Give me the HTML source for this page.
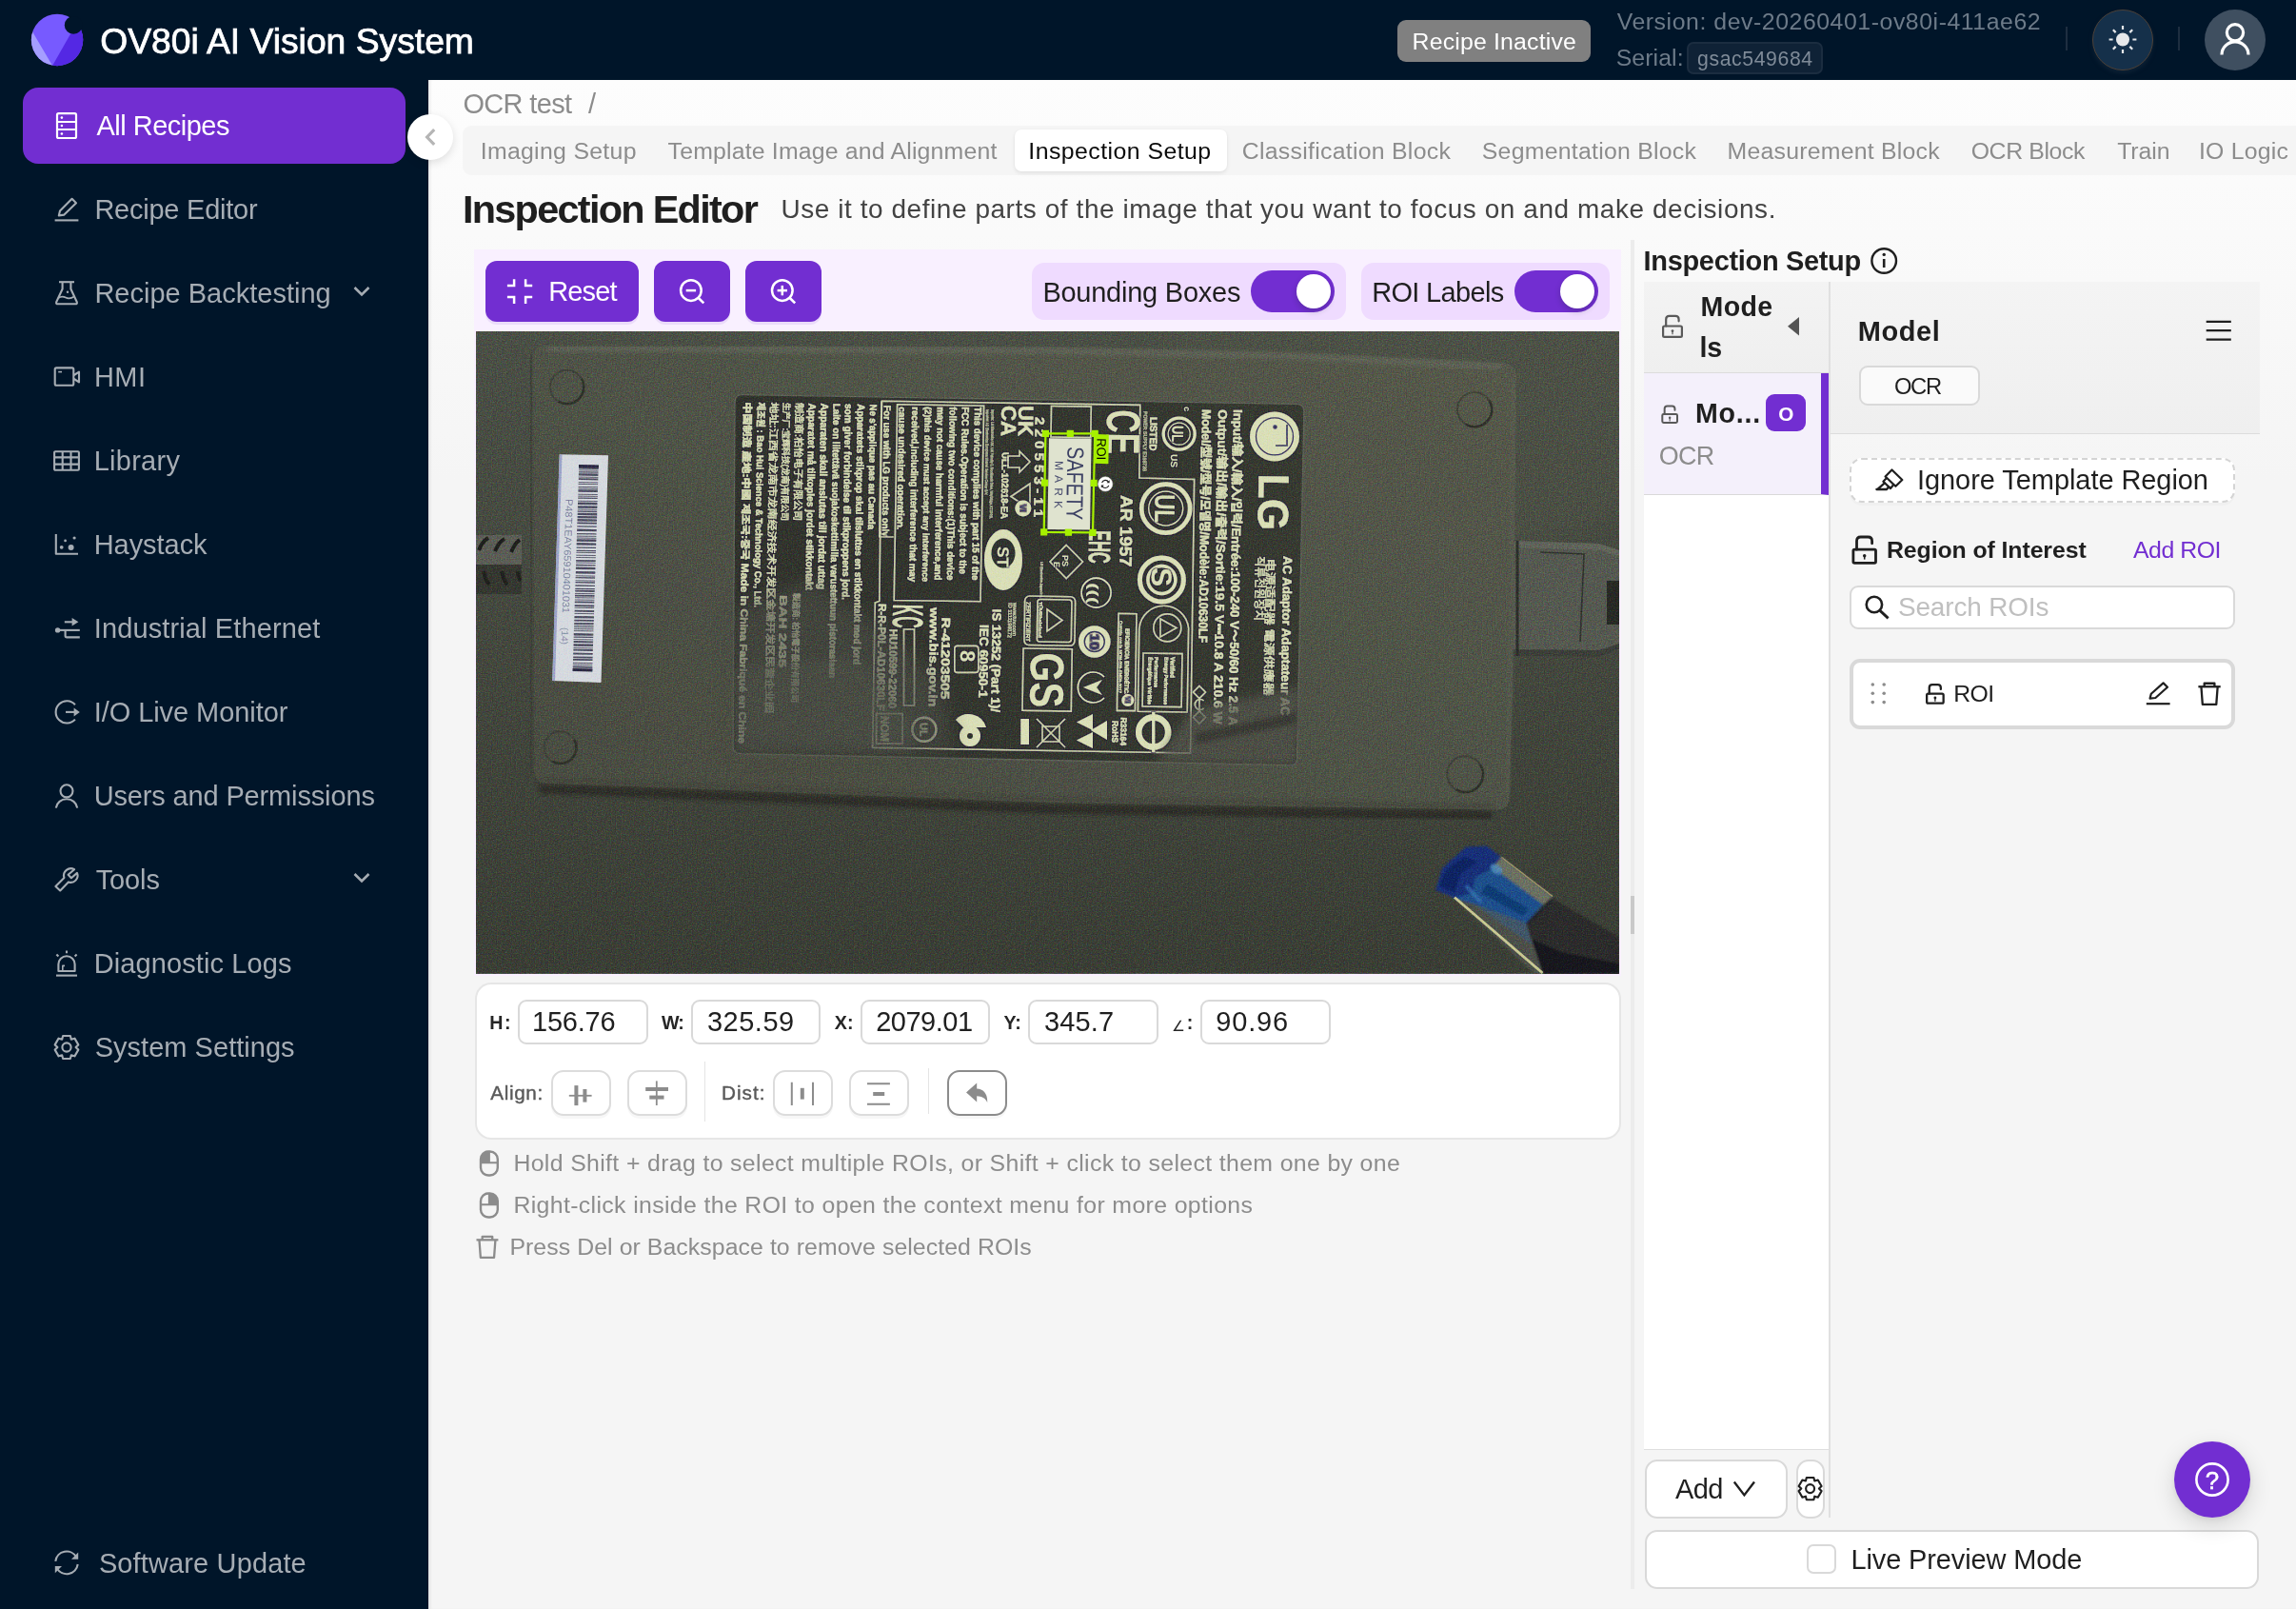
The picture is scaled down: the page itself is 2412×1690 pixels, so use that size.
<!DOCTYPE html>
<html lang="en"><head><meta charset="utf-8"><title>OV80i AI Vision System</title>
<style>
*{box-sizing:border-box}
html,body{margin:0;padding:0}
body{width:2412px;height:1690px;overflow:hidden;background:#001529;position:relative;font-family:"Liberation Sans",sans-serif;transform:translateZ(0);-webkit-font-smoothing:antialiased;}
.a{position:absolute}
.t{position:absolute;white-space:pre;line-height:1;margin:0;font-weight:400;display:block}
.main{left:450px;top:84px;width:1962px;height:1606px;background:linear-gradient(to bottom,#fdfdfd 0px,#fafafa 160px,#f5f5f5 420px,#f5f5f5 100%);box-shadow:inset 3px 0 3px -1px rgba(0,0,0,.08)}
.pbtn{background:#722ed1;border-radius:12px;box-shadow:0 3px 0 rgba(114,46,209,.10)}
.inp{top:1049.5px;height:47px;width:136.3px;border:2px solid #d9d9d9;border-radius:9px;background:#fff}
.abtn{top:1124px;height:48px;width:63px;border:2px solid #dcdcdc;border-radius:13px;background:#fff;box-shadow:0 3px 0 rgba(0,0,0,.03)}
.sw{width:88px;height:44px;border-radius:22px;background:#722ed1;top:284px}
.sw i{position:absolute;left:48px;top:4px;width:36px;height:36px;border-radius:18px;background:#fff;box-shadow:0 3px 6px rgba(0,35,11,.2)}
.pill{top:276px;height:60px;border-radius:13px;background:#efdbff}
</style></head>
<body>
<div class="a main"></div>
<header id="topbar">
<div class="a" style="left:1468px;top:21px;width:203px;height:44px;border-radius:9px;background:#808080"></div>
<div class="a" style="left:1772px;top:44px;width:143px;height:33.5px;border-radius:7px;background:#0f2236;border:2px solid #1b2d40"></div>
<div class="a" style="left:2170px;top:28px;width:2px;height:25px;background:#1e2e40"></div>
<div class="a" style="left:2288px;top:28px;width:2px;height:25px;background:#1e2e40"></div>
<div class="a" style="left:2198px;top:9.5px;width:64px;height:64px;border-radius:32px;background:#15304a;border:1.6px solid #4c4138;box-shadow:0 3px 4px rgba(20,40,60,.6)"></div>
<div class="a" style="left:2316px;top:9.5px;width:64px;height:64px;border-radius:32px;background:#3f4f60"></div>
<svg class="a" style="left:0;top:0;overflow:visible;pointer-events:none" width="2412" height="1690" viewBox="0 0 2412 1690" fill="none" stroke-linejoin="round">
<g><clipPath id="lgc"><circle cx="60.05" cy="41.95" r="27.2"/></clipPath><g clip-path="url(#lgc)"><rect x="30" y="10" width="60" height="64" fill="#775aff"/><path d="M55.1 68.9L28.4 23.7H0V90H55.1Z" fill="#a59eff"/><path d="M55.1 68.9L85 16.4H100V90H55.1Z" fill="#5428e4"/></g><circle cx="77.2" cy="26.4" r="9.4" fill="#001529"/></g>
<circle cx="2230" cy="41.5" r="7" fill="#e6e8ea"/><path d="M2240.40 41.50L2244.40 41.50M2237.35 48.85L2240.18 51.68M2230.00 51.90L2230.00 55.90M2222.65 48.85L2219.82 51.68M2219.60 41.50L2215.60 41.50M2222.65 34.15L2219.82 31.32M2230.00 31.10L2230.00 27.10M2237.35 34.15L2240.18 31.32" stroke="#e6e8ea" stroke-width="2.2"/>
<circle cx="2348" cy="34.2" r="8.6" stroke="#fff" stroke-width="3.2"/><path d="M2334 57.5A14 13.6 0 0 1 2362 57.5" stroke="#fff" stroke-width="3.2"/>
</svg>
<h1 class="t" style="left:105.17px;top:24.51px;font-size:37.26px;color:#ffffff;letter-spacing:0.002px;-webkit-text-stroke:0.75px #ffffff;">OV80i AI Vision System</h1>
<span class="t" style="left:1483.60px;top:32.31px;font-size:24.84px;color:#ffffff;letter-spacing:0.176px;">Recipe Inactive</span>
<span class="t" style="left:1698.70px;top:11.11px;font-size:24.84px;color:#6d7b89;letter-spacing:0.554px;">Version: dev-20260401-ov80i-411ae62</span>
<span class="t" style="left:1697.70px;top:48.81px;font-size:24.84px;color:#6d7b89;letter-spacing:0.087px;">Serial:</span>
<span class="t" style="left:1783.00px;top:51.01px;font-size:21.22px;color:#7f8b98;letter-spacing:0.608px;">gsac549684</span>
</header>
<main id="content">
<nav id="breadcrumb" aria-label="Breadcrumb">
<span class="t" style="left:486.40px;top:95.30px;font-size:28.98px;color:#8c8c8c;letter-spacing:-0.638px;">OCR test</span>
<span class="t" style="left:618.00px;top:95.30px;font-size:28.98px;color:#8c8c8c;letter-spacing:0.000px;">/</span>
</nav>
<nav id="recipe-tabs" aria-label="Recipe steps">
<div class="a" style="left:486px;top:132px;width:1926px;height:52px;border-radius:9px 0 0 9px;background:#f5f5f5"></div>
<div class="a" style="left:1066px;top:136px;width:223px;height:43.5px;border-radius:7px;background:#fff;box-shadow:0 2px 4px rgba(0,0,0,.08),0 0 2px rgba(0,0,0,.04)"></div>
<span class="t" style="left:504.70px;top:147.00px;font-size:24.84px;color:#8c8c8c;letter-spacing:0.308px;">Imaging Setup</span>
<span class="t" style="left:701.60px;top:147.00px;font-size:24.84px;color:#8c8c8c;letter-spacing:0.179px;">Template Image and Alignment</span>
<span class="t" style="left:1080.30px;top:147.00px;font-size:24.84px;color:#0a0a0a;letter-spacing:0.456px;">Inspection Setup</span>
<span class="t" style="left:1304.80px;top:147.00px;font-size:24.84px;color:#8c8c8c;letter-spacing:0.270px;">Classification Block</span>
<span class="t" style="left:1556.80px;top:147.00px;font-size:24.84px;color:#8c8c8c;letter-spacing:0.252px;">Segmentation Block</span>
<span class="t" style="left:1814.50px;top:147.00px;font-size:24.84px;color:#8c8c8c;letter-spacing:0.232px;">Measurement Block</span>
<span class="t" style="left:2070.70px;top:147.00px;font-size:24.84px;color:#8c8c8c;letter-spacing:-0.384px;">OCR Block</span>
<span class="t" style="left:2224.20px;top:147.00px;font-size:24.84px;color:#8c8c8c;letter-spacing:-0.059px;">Train</span>
<span class="t" style="left:2309.90px;top:147.00px;font-size:24.84px;color:#8c8c8c;letter-spacing:0.222px;">IO Logic</span>
</nav>
<section id="inspection-editor">
<h2 class="t" style="left:485.90px;top:199.52px;font-size:41.4px;font-weight:700;color:#1f1f1f;letter-spacing:-1.696px;">Inspection Editor</h2>
<span class="t" style="left:820.40px;top:205.51px;font-size:27.94px;color:#434343;letter-spacing:0.581px;">Use it to define parts of the image that you want to focus on and make decisions.</span>
<div id="canvas-toolbar">
<div class="a" style="left:498px;top:262px;width:1204.7px;height:762.7px;background:#f9f0ff"></div>
<div class="a pbtn" style="left:510px;top:274px;width:161px;height:64px"></div>
<div class="a pbtn" style="left:687px;top:274px;width:80px;height:64px"></div>
<div class="a pbtn" style="left:783px;top:274px;width:80px;height:64px"></div>
<div class="a pill" style="left:1084px;width:329.5px"></div>
<div class="a pill" style="left:1430px;width:261px"></div>
<div class="a sw" style="left:1314px"><i></i></div>
<div class="a sw" style="left:1591px"><i></i></div>
<svg class="a" style="left:0;top:0;overflow:visible;pointer-events:none" width="2412" height="1690" viewBox="0 0 2412 1690" fill="none" stroke-linejoin="round">
<path d="M532.9 300H540.1V293.3M559.2 300H552.1V293.3M532.9 312.1H540.1V318.9M559.2 312.1H552.1V318.9" stroke="#fff" stroke-width="2.5" stroke-linejoin="miter"/>
<circle cx="725.9" cy="305.1" r="10.8" stroke="#fff" stroke-width="2.5"/><path d="M733.8 313L739.3 318.4" stroke="#fff" stroke-width="2.6"/>
<path d="M720.6999999999999 305.1H731.1" stroke="#fff" stroke-width="2.5"/>
<circle cx="821.8" cy="305.1" r="10.8" stroke="#fff" stroke-width="2.5"/><path d="M829.6999999999999 313L835.1999999999999 318.4" stroke="#fff" stroke-width="2.6"/>
<path d="M816.5999999999999 305.1H827.0" stroke="#fff" stroke-width="2.5"/>
<path d="M821.8 299.9V310.3" stroke="#fff" stroke-width="2.5"/>
</svg>
<span class="t" style="left:576.20px;top:291.80px;font-size:28.98px;color:#ffffff;letter-spacing:-0.832px;">Reset</span>
<span class="t" style="left:1095.40px;top:292.71px;font-size:28.98px;color:#1f1f1f;letter-spacing:-0.231px;">Bounding Boxes</span>
<span class="t" style="left:1441.20px;top:292.71px;font-size:28.98px;color:#1f1f1f;letter-spacing:-0.659px;">ROI Labels</span>
</div>
<figure id="canvas" style="margin:0">
<svg class="a" style="left:500px;top:348px" width="1201" height="674.9" viewBox="500 348 1201 674.9" font-family="Liberation Sans, Noto Sans CJK SC, sans-serif">
<defs>
<linearGradient id="pbg" x1="0" y1="0" x2="0" y2="1"><stop offset="0" stop-color="#4a4f45"/><stop offset="0.5" stop-color="#43473d"/><stop offset="1" stop-color="#393d34"/></linearGradient>
<linearGradient id="pbody" x1="1" y1="0" x2="0" y2="1"><stop offset="0" stop-color="#55594b"/><stop offset="1" stop-color="#494c41"/></linearGradient>
<linearGradient id="plabel" x1="0" y1="0" x2="1" y2="0"><stop offset="0" stop-color="#30322b"/><stop offset="0.6" stop-color="#33362e"/><stop offset="1" stop-color="#363930"/></linearGradient>
<filter id="b06" x="-5%" y="-5%" width="110%" height="110%"><feGaussianBlur stdDeviation="0.55"/></filter>
<filter id="halo" x="-5%" y="-5%" width="110%" height="110%"><feMorphology in="SourceAlpha" operator="dilate" radius="0.8" result="d"/><feGaussianBlur in="d" stdDeviation="0.7" result="db"/><feFlood flood-color="#22163f" flood-opacity="0.55"/><feComposite in2="db" operator="in" result="h"/><feGaussianBlur in="SourceGraphic" stdDeviation="0.5" result="sg"/><feMerge><feMergeNode in="h"/><feMergeNode in="sg"/></feMerge></filter>
<filter id="b2" x="-10%" y="-10%" width="120%" height="120%"><feGaussianBlur stdDeviation="2"/></filter>
<filter id="b5" x="-20%" y="-20%" width="140%" height="140%"><feGaussianBlur stdDeviation="5"/></filter>
<filter id="b10" x="-30%" y="-30%" width="160%" height="160%"><feGaussianBlur stdDeviation="10"/></filter>
<filter id="pnoise" color-interpolation-filters="sRGB" x="0" y="0" width="100%" height="100%"><feTurbulence type="fractalNoise" baseFrequency="0.8" numOctaves="2" seed="3"/><feColorMatrix type="matrix" values="1.6 0 0 0 -0.3  0 1.6 0 0 -0.3  0 0 1.6 0 -0.3  0 0 0 0 1"/></filter>
</defs>
<rect x="500" y="348" width="1201" height="674.9" fill="url(#pbg)"/>
<ellipse cx="1500" cy="420" rx="300" ry="160" fill="#4f5347" opacity="0.5" filter="url(#b10)"/>
<g><rect x="498" y="562" width="50" height="31" fill="#5b5d55"/><rect x="498" y="593" width="50" height="31" fill="#34362f"/><path d="M503 578q4 -10 10 -13M520 579q4 -10 10 -13M537 580q4 -10 9 -13" stroke="#1d1e1b" stroke-width="4" fill="none"/><path d="M508 600q2 10 6 14M527 600q2 10 6 14M544 600q1 8 3 10" stroke="#1f201c" stroke-width="4" fill="none"/></g>
<g><path d="M1590 568L1680 571L1701 578L1701 682L1680 690L1590 689Z" fill="#555950"/><path d="M1590 568L1680 571L1701 578L1701 584L1680 578L1590 575Z" fill="#60645a"/><path d="M1590 682L1680 683L1701 676L1701 682L1680 690L1590 689Z" fill="#3b3e38"/><path d="M1618 580L1664 582L1660 674" stroke="#2f312c" stroke-width="1.6" fill="none"/><rect x="1688" y="610" width="14" height="46" fill="#262823"/><path d="M1594 568V689" stroke="#2c2e29" stroke-width="3"/></g>
<path d="M557.5 372L558.5 815" stroke="#3a3d35" stroke-width="7" fill="none" opacity="0.8" filter="url(#b2)"/>
<path d="M566 826.5L1100 848.5L1566 856" stroke="#30322a" stroke-width="10" fill="none" opacity="0.85" filter="url(#b2)"/>
<path d="M574 362.2L1100 364.4L1350 370L1579 381.4Q1593.2 382.4 1593 397L1589.5 700L1585.5 838Q1585 850.6 1572 850.4L1100 843L574 822.4Q561.2 821.8 561.2 809L560.6 375Q560.8 362.2 574 362.2Z" fill="url(#pbody)" filter="url(#b06)"/>
<path d="M574 366L1100 368.2L1350 373.8L1578 385.2" stroke="#62665a" stroke-width="7" fill="none" opacity="0.8" filter="url(#b2)"/>
<path d="M1590.5 400L1587.5 700L1583.5 836" stroke="#5d6155" stroke-width="3" fill="none" opacity="0.7" filter="url(#b2)"/>
<path d="M570 819L1100 839.5L1570 847" stroke="#42453b" stroke-width="6" fill="none" opacity="0.7" filter="url(#b2)"/>
<path d="M568 829.5L1100 850.5L1567 857.5" stroke="#2a2c25" stroke-width="6.5" fill="none" opacity="0.85" filter="url(#b2)"/>
<circle cx="595.5" cy="406.4" r="17.6" fill="none" stroke="#3b3e35" stroke-width="2" opacity="0.8" filter="url(#b06)"/>
<path d="M586.7 421.7A17.6 17.6 0 0 0 610.8 397.6" stroke="#2b2d27" stroke-width="2.6" fill="none" opacity="0.8" filter="url(#b06)"/>
<circle cx="1549" cy="430" r="18" fill="none" stroke="#3b3e35" stroke-width="2" opacity="0.8" filter="url(#b06)"/>
<path d="M1540.0 445.7A18 18 0 0 0 1564.7 421.0" stroke="#2b2d27" stroke-width="2.6" fill="none" opacity="0.8" filter="url(#b06)"/>
<circle cx="588.5" cy="785" r="16.8" fill="none" stroke="#3b3e35" stroke-width="2" opacity="0.8" filter="url(#b06)"/>
<path d="M580.1 799.6A16.8 16.8 0 0 0 603.1 776.6" stroke="#2b2d27" stroke-width="2.6" fill="none" opacity="0.8" filter="url(#b06)"/>
<circle cx="1539" cy="813" r="18.8" fill="none" stroke="#3b3e35" stroke-width="2" opacity="0.8" filter="url(#b06)"/>
<path d="M1529.6 829.4A18.8 18.8 0 0 0 1555.4 803.6" stroke="#2b2d27" stroke-width="2.6" fill="none" opacity="0.8" filter="url(#b06)"/>
<path d="M587.7 477.3L639 478.2L631.5 717L580.2 715.1Z" fill="#d6dadf"/>
<path d="M587.7 477.3L590.5 477.4L583 715.2L580.2 715.1Z" fill="#8f97c4" opacity="0.8"/>
<path d="M608.2 489.1L628.7 489.4" stroke="#34344a" stroke-width="1.3" opacity="0.85"/>
<path d="M608.1 491.7L628.6 492.0" stroke="#34344a" stroke-width="1.8" opacity="0.85"/>
<path d="M608.1 493.9L628.6 494.2" stroke="#34344a" stroke-width="0.9" opacity="0.85"/>
<path d="M608.0 495.8L628.5 496.1" stroke="#34344a" stroke-width="1.3" opacity="0.85"/>
<path d="M607.9 498.4L628.4 498.7" stroke="#34344a" stroke-width="2.4" opacity="0.85"/>
<path d="M607.8 501.1L628.3 501.4" stroke="#34344a" stroke-width="0.9" opacity="0.85"/>
<path d="M607.8 503.2L628.3 503.5" stroke="#34344a" stroke-width="1.8" opacity="0.85"/>
<path d="M607.7 506.6L628.2 506.9" stroke="#34344a" stroke-width="0.9" opacity="0.85"/>
<path d="M607.6 508.4L628.1 508.8" stroke="#34344a" stroke-width="0.9" opacity="0.85"/>
<path d="M607.5 511.3L628.0 511.6" stroke="#34344a" stroke-width="0.9" opacity="0.85"/>
<path d="M607.5 513.1L628.0 513.4" stroke="#34344a" stroke-width="0.9" opacity="0.85"/>
<path d="M607.4 515.5L627.9 515.8" stroke="#34344a" stroke-width="2.4" opacity="0.85"/>
<path d="M607.3 519.2L627.8 519.5" stroke="#34344a" stroke-width="0.9" opacity="0.85"/>
<path d="M607.2 521.1L627.7 521.4" stroke="#34344a" stroke-width="0.9" opacity="0.85"/>
<path d="M607.2 523.1L627.7 523.4" stroke="#34344a" stroke-width="1.3" opacity="0.85"/>
<path d="M607.1 526.2L627.6 526.5" stroke="#34344a" stroke-width="0.9" opacity="0.85"/>
<path d="M607.0 528.7L627.5 529.0" stroke="#34344a" stroke-width="2.4" opacity="0.85"/>
<path d="M606.9 532.5L627.4 532.8" stroke="#34344a" stroke-width="2.4" opacity="0.85"/>
<path d="M606.8 535.1L627.3 535.4" stroke="#34344a" stroke-width="0.9" opacity="0.85"/>
<path d="M606.7 537.2L627.2 537.5" stroke="#34344a" stroke-width="1.3" opacity="0.85"/>
<path d="M606.7 539.9L627.2 540.2" stroke="#34344a" stroke-width="2.4" opacity="0.85"/>
<path d="M606.6 543.1L627.1 543.4" stroke="#34344a" stroke-width="2.4" opacity="0.85"/>
<path d="M606.5 546.3L627.0 546.6" stroke="#34344a" stroke-width="2.4" opacity="0.85"/>
<path d="M606.4 549.4L626.9 549.7" stroke="#34344a" stroke-width="1.8" opacity="0.85"/>
<path d="M606.3 552.9L626.8 553.2" stroke="#34344a" stroke-width="1.3" opacity="0.85"/>
<path d="M606.2 556.8L626.7 557.1" stroke="#34344a" stroke-width="2.4" opacity="0.85"/>
<path d="M606.0 560.6L626.5 560.9" stroke="#34344a" stroke-width="1.3" opacity="0.85"/>
<path d="M605.9 563.1L626.4 563.4" stroke="#34344a" stroke-width="0.9" opacity="0.85"/>
<path d="M605.9 565.0L626.4 565.3" stroke="#34344a" stroke-width="0.9" opacity="0.85"/>
<path d="M605.8 567.5L626.3 567.8" stroke="#34344a" stroke-width="2.4" opacity="0.85"/>
<path d="M605.7 571.3L626.2 571.6" stroke="#34344a" stroke-width="2.4" opacity="0.85"/>
<path d="M605.6 575.1L626.1 575.4" stroke="#34344a" stroke-width="1.3" opacity="0.85"/>
<path d="M605.5 578.4L626.0 578.7" stroke="#34344a" stroke-width="1.3" opacity="0.85"/>
<path d="M605.4 580.3L625.9 580.6" stroke="#34344a" stroke-width="0.9" opacity="0.85"/>
<path d="M605.3 583.2L625.8 583.5" stroke="#34344a" stroke-width="0.9" opacity="0.85"/>
<path d="M605.3 585.5L625.8 585.8" stroke="#34344a" stroke-width="0.9" opacity="0.85"/>
<path d="M605.2 588.9L625.7 589.2" stroke="#34344a" stroke-width="1.8" opacity="0.85"/>
<path d="M605.1 591.0L625.6 591.3" stroke="#34344a" stroke-width="0.9" opacity="0.85"/>
<path d="M605.0 593.5L625.5 593.8" stroke="#34344a" stroke-width="1.3" opacity="0.85"/>
<path d="M604.9 596.8L625.4 597.1" stroke="#34344a" stroke-width="2.4" opacity="0.85"/>
<path d="M604.8 601.2L625.3 601.5" stroke="#34344a" stroke-width="2.4" opacity="0.85"/>
<path d="M604.7 604.8L625.2 605.1" stroke="#34344a" stroke-width="0.9" opacity="0.85"/>
<path d="M604.6 606.7L625.1 607.0" stroke="#34344a" stroke-width="1.3" opacity="0.85"/>
<path d="M604.5 609.8L625.0 610.1" stroke="#34344a" stroke-width="0.9" opacity="0.85"/>
<path d="M604.5 611.7L625.0 612.0" stroke="#34344a" stroke-width="1.3" opacity="0.85"/>
<path d="M604.4 615.0L624.9 615.3" stroke="#34344a" stroke-width="1.3" opacity="0.85"/>
<path d="M604.3 618.3L624.8 618.6" stroke="#34344a" stroke-width="1.3" opacity="0.85"/>
<path d="M604.2 620.7L624.7 621.0" stroke="#34344a" stroke-width="1.8" opacity="0.85"/>
<path d="M604.1 623.4L624.6 623.7" stroke="#34344a" stroke-width="0.9" opacity="0.85"/>
<path d="M604.0 625.6L624.5 625.9" stroke="#34344a" stroke-width="1.8" opacity="0.85"/>
<path d="M604.0 627.7L624.5 628.0" stroke="#34344a" stroke-width="0.9" opacity="0.85"/>
<path d="M603.9 630.0L624.4 630.3" stroke="#34344a" stroke-width="0.9" opacity="0.85"/>
<path d="M603.8 632.4L624.3 632.7" stroke="#34344a" stroke-width="1.8" opacity="0.85"/>
<path d="M603.7 636.2L624.2 636.5" stroke="#34344a" stroke-width="1.8" opacity="0.85"/>
<path d="M603.6 638.3L624.1 638.6" stroke="#34344a" stroke-width="0.9" opacity="0.85"/>
<path d="M603.6 641.7L624.1 642.0" stroke="#34344a" stroke-width="1.8" opacity="0.85"/>
<path d="M603.5 644.4L624.0 644.7" stroke="#34344a" stroke-width="0.9" opacity="0.85"/>
<path d="M603.4 648.1L623.9 648.4" stroke="#34344a" stroke-width="2.4" opacity="0.85"/>
<path d="M603.3 651.6L623.8 651.9" stroke="#34344a" stroke-width="1.8" opacity="0.85"/>
<path d="M603.2 654.8L623.7 655.1" stroke="#34344a" stroke-width="1.8" opacity="0.85"/>
<path d="M603.1 657.1L623.6 657.4" stroke="#34344a" stroke-width="0.9" opacity="0.85"/>
<path d="M603.0 658.8L623.5 659.1" stroke="#34344a" stroke-width="0.9" opacity="0.85"/>
<path d="M603.0 660.7L623.5 661.0" stroke="#34344a" stroke-width="0.9" opacity="0.85"/>
<path d="M602.9 662.6L623.4 662.9" stroke="#34344a" stroke-width="0.9" opacity="0.85"/>
<path d="M602.8 666.3L623.3 666.6" stroke="#34344a" stroke-width="2.4" opacity="0.85"/>
<path d="M602.7 669.1L623.2 669.4" stroke="#34344a" stroke-width="1.3" opacity="0.85"/>
<path d="M602.6 671.6L623.1 671.9" stroke="#34344a" stroke-width="0.9" opacity="0.85"/>
<path d="M602.6 674.0L623.1 674.3" stroke="#34344a" stroke-width="1.8" opacity="0.85"/>
<path d="M602.5 677.5L623.0 677.8" stroke="#34344a" stroke-width="2.4" opacity="0.85"/>
<path d="M602.4 680.5L622.9 680.8" stroke="#34344a" stroke-width="0.9" opacity="0.85"/>
<path d="M602.3 682.7L622.8 683.0" stroke="#34344a" stroke-width="1.8" opacity="0.85"/>
<path d="M602.2 686.5L622.7 686.8" stroke="#34344a" stroke-width="1.8" opacity="0.85"/>
<path d="M602.1 690.3L622.6 690.6" stroke="#34344a" stroke-width="1.8" opacity="0.85"/>
<path d="M602.0 692.9L622.5 693.2" stroke="#34344a" stroke-width="1.8" opacity="0.85"/>
<path d="M601.9 696.2L622.4 696.5" stroke="#34344a" stroke-width="0.9" opacity="0.85"/>
<path d="M601.8 698.1L622.3 698.4" stroke="#34344a" stroke-width="0.9" opacity="0.85"/>
<path d="M601.8 700.5L622.3 700.8" stroke="#34344a" stroke-width="1.8" opacity="0.85"/>
<path d="M601.7 702.8L622.2 703.1" stroke="#34344a" stroke-width="0.9" opacity="0.85"/>
<path d="M608 489.5L629 490" stroke="#2a2a44" stroke-width="3"/><path d="M601.6 703.5L622.4 704" stroke="#2a2a44" stroke-width="3"/>
<text transform="translate(594.5,524) rotate(91.8)" font-size="10.5" fill="#7f86a0" textLength="120" lengthAdjust="spacingAndGlyphs">P48T1EAY65910401031</text>
<text transform="translate(590,659) rotate(91.8)" font-size="10" fill="#8a90a8" textLength="18" lengthAdjust="spacingAndGlyphs">(14)</text>
<path d="M780 414.6L1362 424.4Q1370 424.6 1369.9 432.5L1362.6 796Q1362.4 804 1354.4 803.8L778 791.7Q770 791.5 770.1 783.5L772 422.5Q772 414.5 780 414.6Z" fill="url(#plabel)" stroke="#5f6358" stroke-width="1.4"/>
<g fill="#dadfb8" stroke="#dadfb8" stroke-width="0.45" filter="url(#halo)">
<text transform="translate(1024.0,427.3) rotate(90.9)" font-size="10.2" font-weight="700" textLength="182.2" lengthAdjust="spacingAndGlyphs">This device complies with part 15 of the</text>
<text transform="translate(1010.7,427.3) rotate(90.9)" font-size="10.4" font-weight="700" textLength="175.7" lengthAdjust="spacingAndGlyphs">FCC Rules.Operation is subject to the</text>
<text transform="translate(997.7,427.3) rotate(90.9)" font-size="10.3" font-weight="700" textLength="182.2" lengthAdjust="spacingAndGlyphs">following two conditions:(1)This device</text>
<text transform="translate(984.8,427.3) rotate(90.9)" font-size="10.2" font-weight="700" textLength="182.2" lengthAdjust="spacingAndGlyphs">may not cause harmful interference,and</text>
<text transform="translate(971.7,427.3) rotate(90.9)" font-size="9.5" font-weight="700" textLength="183.7" lengthAdjust="spacingAndGlyphs">(2)this device must accept any interference</text>
<text transform="translate(958.2,427.3) rotate(90.9)" font-size="10.2" font-weight="700" textLength="183.7" lengthAdjust="spacingAndGlyphs">received,including interference that may</text>
<text transform="translate(944.3,427.3) rotate(90.9)" font-size="10.5" font-weight="700" textLength="129.3" lengthAdjust="spacingAndGlyphs">cause undesired operation.</text>
<text transform="translate(928.8,425.5) rotate(90.9)" font-size="10.1" font-weight="700" textLength="138.0" lengthAdjust="spacingAndGlyphs">For use with LG products only</text>
<text transform="translate(914.1,424.5) rotate(90.9)" font-size="10.1" font-weight="700" textLength="131.5" lengthAdjust="spacingAndGlyphs">Ne s&#x27;applique pas au Canada</text>
<text transform="translate(900.9,424.3) rotate(90.9)" font-size="10.5" font-weight="700" textLength="273.7" lengthAdjust="spacingAndGlyphs">Apparatets stikprop skal tilsluttes en stikkontakt med jord</text>
<text transform="translate(887.9,424.0) rotate(90.9)" font-size="10.6" font-weight="700" textLength="206.0" lengthAdjust="spacingAndGlyphs">som giver forbindelse til stikproppens jord.</text>
<text transform="translate(875.6,423.8) rotate(90.9)" font-size="10.3" font-weight="700" textLength="288.2" lengthAdjust="spacingAndGlyphs">Laite on liitettävä suojakoskettimilla varustettuun pistorasiaan</text>
<text transform="translate(862.4,423.6) rotate(90.9)" font-size="10.9" font-weight="700" textLength="195.4" lengthAdjust="spacingAndGlyphs">Apparaten skall anslutas till jordat uttag</text>
<text transform="translate(849.5,423.4) rotate(90.9)" font-size="10.8" font-weight="700" textLength="196.6" lengthAdjust="spacingAndGlyphs">Apparatet må tilkoples jordet stikkontakt</text>
<text transform="translate(836.1,423.0) rotate(90.9)" font-size="10.5" textLength="124.0" lengthAdjust="spacingAndGlyphs">制造商:柏怡电子有限公司</text>
<text transform="translate(833.4,623.0) rotate(90.9)" font-size="9.0" textLength="115.0" lengthAdjust="spacingAndGlyphs">製造商: 柏怡電子股份有限公司</text>
<text transform="translate(822.9,422.8) rotate(90.9)" font-size="9.4" textLength="124.2" lengthAdjust="spacingAndGlyphs">生产厂:宝辉科技(龙南)有限公司</text>
<text transform="translate(819.2,625.0) rotate(90.9)" font-size="11.0" font-weight="700" textLength="76.0" lengthAdjust="spacingAndGlyphs">BAH    2435</text>
<text transform="translate(809.4,422.6) rotate(90.9)" font-size="10.5" textLength="326.4" lengthAdjust="spacingAndGlyphs">地址:江西省龙南市龙南经济技术开发区金塘开发区民营企业园</text>
<text transform="translate(795.9,422.4) rotate(90.9)" font-size="10.1" font-weight="700" textLength="215.6" lengthAdjust="spacingAndGlyphs">제조원 : Bao Hui Science &amp; Technology Co., Ltd.</text>
<text transform="translate(781.6,422.2) rotate(90.9)" font-size="10.5" font-weight="700" textLength="358.8" lengthAdjust="spacingAndGlyphs">中国制造  產地:中國  제조국:중국  Made in China  Fabriqué en Chine</text>
<text transform="translate(1041.6,430.0) rotate(90.9)" font-size="4.0" opacity="0.7" textLength="115.0" lengthAdjust="spacingAndGlyphs">Importer: LG Electronics U.K. Ltd. Velocity 2, Brooklands Drive, Weybridge, KT13 0SL</text>
<text transform="translate(1036.1,430.0) rotate(90.9)" font-size="4.0" opacity="0.7" textLength="90.0" lengthAdjust="spacingAndGlyphs">Importer: LG Electronics European Shared Service Center B.V.</text>
<text transform="translate(1070.2,426.0) rotate(90.9)" font-size="22.0" font-weight="700" textLength="32.0" lengthAdjust="spacingAndGlyphs">UK</text>
<text transform="translate(1052.2,426.0) rotate(90.9)" font-size="22.0" font-weight="700" textLength="32.0" lengthAdjust="spacingAndGlyphs">CA</text>
<text transform="translate(1087.8,438.0) rotate(90.9)" font-size="13.5" font-weight="700" textLength="105.0" lengthAdjust="spacingAndGlyphs">2 2 0 5 5 3 - 1 1</text>
<text transform="translate(1052.7,475.0) rotate(90.9)" font-size="10.1" font-weight="700" textLength="70.0" lengthAdjust="spacingAndGlyphs">ULL-102618-EA</text>
<text transform="translate(1296.1,430.0) rotate(90.9)" font-size="13.0" font-weight="700" textLength="332.0" lengthAdjust="spacingAndGlyphs">Input/输入/輸入/입력/Entrée:100-240 V～50/60 Hz 2.5 A</text>
<text transform="translate(1280.1,430.0) rotate(90.9)" font-size="13.0" font-weight="700" textLength="330.5" lengthAdjust="spacingAndGlyphs">Output/输出/輸出/출력/Sortie:19.5 V⎓10.8 A   210.6 W</text>
<text transform="translate(1263.1,430.0) rotate(90.9)" font-size="13.0" font-weight="700" textLength="245.0" lengthAdjust="spacingAndGlyphs">Model/型號/型号/모델명/Modèle:AD10630LF</text>
<text transform="translate(1348.2,584.0) rotate(90.9)" font-size="13.0" font-weight="700" textLength="167.6" lengthAdjust="spacingAndGlyphs">AC Adaptor  Adaptateur AC</text>
<text transform="translate(1330.5,586.5) rotate(90.9)" font-size="12.0" textLength="144.2" lengthAdjust="spacingAndGlyphs">电源适配器  電源供應器</text>
<text transform="translate(1319.5,584.0) rotate(90.9)" font-size="12.0" textLength="68.0" lengthAdjust="spacingAndGlyphs">직류전원장치</text>
<text transform="translate(1322.4,497.6) rotate(90.9)" font-size="45.3" font-weight="700" textLength="59.4" lengthAdjust="spacingAndGlyphs">LG</text>
<text transform="translate(1177.4,520.0) rotate(90.9)" font-size="18.0" font-weight="700" textLength="75.0" lengthAdjust="spacingAndGlyphs">AR 1957</text>
<text transform="translate(1208.3,438.0) rotate(90.9)" font-size="10.6" font-weight="700" textLength="35.5" lengthAdjust="spacingAndGlyphs">LISTED</text>
<text transform="translate(1201.6,432.0) rotate(90.9)" font-size="5.3" opacity="0.7" textLength="63.0" lengthAdjust="spacingAndGlyphs">POWER SUPPLY  E168738</text>
<text transform="translate(1042.8,639.5) rotate(90.9)" font-size="13.0" font-weight="700" textLength="108.5" lengthAdjust="spacingAndGlyphs">IS 13252 (Part 1)/</text>
<text transform="translate(1029.4,656.0) rotate(90.9)" font-size="13.0" font-weight="700" textLength="76.5" lengthAdjust="spacingAndGlyphs">IEC 60950-1</text>
<text transform="translate(989.6,648.5) rotate(90.9)" font-size="12.5" font-weight="700" textLength="86.0" lengthAdjust="spacingAndGlyphs">R-41203505</text>
<text transform="translate(977.3,638.0) rotate(90.9)" font-size="12.5" font-weight="700" textLength="104.5" lengthAdjust="spacingAndGlyphs">www.bis.gov.in</text>
<text transform="translate(934.7,660.5) rotate(90.9)" font-size="11.5" font-weight="700" textLength="83.5" lengthAdjust="spacingAndGlyphs">HU10599-22060</text>
<text transform="translate(922.9,634.0) rotate(90.9)" font-size="11.5" font-weight="700" textLength="112.5" lengthAdjust="spacingAndGlyphs">R-R-P0L-AD10630LF</text>
<text transform="translate(1177.4,753.5) rotate(90.9)" font-size="8.9" font-weight="700" textLength="29.5" lengthAdjust="spacingAndGlyphs">R33164</text>
<text transform="translate(1168.6,757.0) rotate(90.9)" font-size="9.0" font-weight="700" textLength="23.0" lengthAdjust="spacingAndGlyphs">RoHS</text>
<text transform="translate(925.4,752.0) rotate(90.9)" font-size="12.3" font-weight="700" textLength="27.0" lengthAdjust="spacingAndGlyphs">NOM</text>
<text transform="translate(1144.2,557.0) rotate(90.9)" font-size="32.4" font-weight="700" textLength="34.5" lengthAdjust="spacingAndGlyphs">EHC</text>
<text transform="translate(1182.3,660.0) rotate(90.9)" font-size="6.1" font-weight="700" textLength="72.0" lengthAdjust="spacingAndGlyphs">EFICIENCIA ENERGÉTICA</text>
<text transform="translate(1175.8,652.0) rotate(90.9)" font-size="4.8" textLength="76.0" lengthAdjust="spacingAndGlyphs">Cumple con la NOM-029-ENER-2017</text>
<text transform="translate(1229.7,690.0) rotate(90.9)" font-size="6.5" font-weight="700" textLength="22.0" lengthAdjust="spacingAndGlyphs">Verified</text>
<text transform="translate(1223.5,690.0) rotate(90.9)" font-size="5.4" font-weight="700" textLength="50.0" lengthAdjust="spacingAndGlyphs">Energy Performance</text>
<text transform="translate(1213.0,690.0) rotate(90.9)" font-size="5.5" font-weight="700" textLength="32.0" lengthAdjust="spacingAndGlyphs">Performance</text>
<text transform="translate(1206.5,690.0) rotate(90.9)" font-size="5.5" font-weight="700" textLength="50.0" lengthAdjust="spacingAndGlyphs">Énergétique Vérifiée</text>
<text transform="translate(1078.1,632.0) rotate(90.9)" font-size="6.5" textLength="42.0" lengthAdjust="spacingAndGlyphs">ZERTIFIZIERT</text>
<text transform="translate(1090.8,632.0) rotate(90.9)" font-size="5.9" font-weight="700" textLength="38.0" lengthAdjust="spacingAndGlyphs">TÜVRheinland</text>
<text transform="translate(1064.4,633.0) rotate(90.9)" font-size="5.5" opacity="0.8" textLength="35.0" lengthAdjust="spacingAndGlyphs">www.tuv.com</text>
<text transform="translate(1059.4,633.0) rotate(90.9)" font-size="5.5" opacity="0.8" textLength="37.0" lengthAdjust="spacingAndGlyphs">ID 1111198172</text>
<text transform="translate(1093.2,590.0) rotate(90.9)" font-size="3.6" opacity="0.8" textLength="38.0" lengthAdjust="spacingAndGlyphs">LG Electronics Japan Inc.</text>
</g>
<g fill="none" stroke="#dadfb8" stroke-width="1.6" opacity="0.92" filter="url(#halo)">
<path d="M942.6 424.8L1033.6 426.2L1030 631.8L939.2 630.5Z"/>
<path d="M926.4 421.2L1197.8 425.4L1196.8 502L1254.6 503.5L1250.6 791L916.6 785.3L919.3 633L923.8 631.5Z"/>
<path d="M926 421.5L923.8 563.8L938.6 564"/>
<rect x="1104.5" y="426.5" width="41.8" height="32.5" transform="rotate(0.9 1104.5 426.5)"/>
<rect x="1076.7" y="626" width="53" height="51.5" rx="5" transform="rotate(0.9 1076.7 626)"/><rect x="1090" y="629.5" width="36" height="44.5" rx="3" transform="rotate(0.9 1090 629.5)"/>
<path d="M1100 640L1116 651.5L1100 663Z"/>
<rect x="1075" y="681" width="51.3" height="65.3" transform="rotate(0.9 1075 681)"/>
<rect x="1175" y="644.4" width="19" height="102" transform="rotate(0.9 1175 644.4)"/>
<path d="M1247.2 748L1195.4 747.2L1196.8 660A26 26 0 0 1 1248.6 660Z"/>
<circle cx="1226.3" cy="659.4" r="14.5"/><rect x="1201" y="686" width="41" height="56" transform="rotate(0.9 1201 686)"/>
<path d="M1219 650L1236 659.5L1219 669Z"/>
<rect x="1002.8" y="678.4" width="25" height="28" rx="3"/>
<rect x="920.6" y="749.6" width="27.6" height="31.4"/>
<rect x="949.5" y="661" width="11" height="80"/>
<path d="M1089 755L1119 785M1119 755L1089 785M1095 763H1113V779H1095Z"/>
<path d="M1260 720.5L1266.5 727L1260 733.5L1253.5 727Z M1260 747L1266.5 753.5L1260 760L1253.5 753.5Z"/><path d="M1264.6 736A5.5 5.5 0 1 0 1264.6 744"/><path d="M1260 733.5V747"/>
<path d="M1120.2 572.5L1137.5 590L1120.2 607.5L1103 590Z"/>
<path d="M1070 473L1081 484L1076 484L1076 496L1064 496L1064 484L1059 484Z" transform="rotate(90 1070 485)"/>
<path d="M1082 508L1062 521.5L1082 535Z"/>
</g>
<g filter="url(#halo)">
<circle cx="1339" cy="458.4" r="26" fill="#dadfb8"/><circle cx="1339" cy="458.4" r="19.5" fill="none" stroke="#3a3660" stroke-width="1.3"/><path d="M1352 446V468H1340" stroke="#3a3660" stroke-width="1.6" fill="none"/><circle cx="1339.5" cy="448.5" r="2.2" fill="#3a3660"/>
<circle cx="1238.7" cy="455.7" r="16.5" fill="none" stroke="#dadfb8" stroke-width="3.2"/>
<circle cx="1238.7" cy="455.7" r="11.5" fill="none" stroke="#dadfb8" stroke-width="1.2"/>
<circle cx="1224.7" cy="534.1" r="25.5" fill="none" stroke="#dadfb8" stroke-width="4.6"/>
<circle cx="1224.7" cy="534.1" r="18" fill="none" stroke="#dadfb8" stroke-width="1.3"/>
<circle cx="1220.4" cy="609" r="23" fill="none" stroke="#dadfb8" stroke-width="5"/>
<circle cx="1220.4" cy="609" r="14.5" fill="none" stroke="#dadfb8" stroke-width="3.5"/>
<ellipse cx="1054" cy="588" rx="20" ry="32" fill="#dadfb8"/><ellipse cx="1054" cy="581" rx="12.5" ry="15.5" fill="#2f322e"/>
<circle cx="1151.6" cy="622.6" r="15.5" fill="none" stroke="#dadfb8" stroke-width="1.6"/>
<circle cx="1149.8" cy="674" r="16.8" fill="#dadfb8"/><circle cx="1149.8" cy="674" r="10.5" fill="none" stroke="#33305a" stroke-width="1.4"/>
<path d="M1160 711A16 16 0 1 0 1160 733" fill="none" stroke="#dadfb8" stroke-width="1.6"/><path d="M1138 722L1158 714L1152 722L1158 730Z" fill="#dadfb8"/>
<circle cx="1211.7" cy="769" r="15.5" fill="none" stroke="#dadfb8" stroke-width="6.5"/>
<path d="M1211.7 748V790" stroke="#dadfb8" stroke-width="3.2"/>
<circle cx="1074.8" cy="534" r="8.5" fill="#dadfb8"/><circle cx="1184.8" cy="735.5" r="6.5" fill="#dadfb8"/>
<circle cx="1019" cy="773" r="11" fill="#dadfb8"/><circle cx="1019" cy="773" r="3" fill="#2f322e"/><path d="M1036 764A19 19 0 0 0 1004 756L1012 764Z" fill="#dadfb8"/>
<rect x="1072.3" y="755" width="8.7" height="27" fill="#dadfb8"/>
<path d="M1163 757L1163 777L1146 767Z M1148 750L1148 767L1131 758.5Z M1148 769L1148 786L1131 777.5Z" fill="#dadfb8"/>
<circle cx="970.9" cy="766.3" r="12.5" fill="none" stroke="#dadfb8" stroke-width="2.4"/>
<text transform="translate(1083,685) rotate(90.9)" font-size="50" font-weight="700" fill="#dadfb8" textLength="58" lengthAdjust="spacingAndGlyphs">GS</text>
<text transform="translate(938,634.5) rotate(90.9)" font-size="46" font-weight="700" fill="#dadfb8" textLength="25" lengthAdjust="spacingAndGlyphs">KC</text>
<path d="M1197 440A22 22 0 0 0 1164 440L1171 444A14 14 0 0 1 1190 444Z M1197 476A22 22 0 0 0 1164 476" fill="none" stroke="#dadfb8" stroke-width="0"/>
</g>
<g fill="#dadfb8" filter="url(#halo)">
<text transform="translate(1163,430) rotate(90.9)" font-size="50" font-weight="700" textLength="47" lengthAdjust="spacingAndGlyphs">CE</text>
<text transform="translate(1213.5,519) rotate(90.9)" font-size="30" font-weight="700" textLength="30" lengthAdjust="spacingAndGlyphs" fill="#dadfb8">UL</text>
<text transform="translate(1231.5,447) rotate(90.9)" font-size="17" font-weight="700" textLength="17" lengthAdjust="spacingAndGlyphs">UL</text>
<text transform="translate(1244,427) rotate(90.9)" font-size="9" font-weight="700">c</text>
<text transform="translate(1230,477) rotate(90.9)" font-size="10" font-weight="700" textLength="14" lengthAdjust="spacingAndGlyphs">US</text>
<text transform="translate(1048,574) rotate(90.9)" font-size="17" font-weight="700" fill="#dadfb8">ST</text>
<text transform="translate(1116,583) rotate(90.9)" font-size="9" font-weight="700">PS</text>
<text transform="translate(1107,590) rotate(90.9)" font-size="9" font-weight="700">E</text>
<text transform="translate(1144,612) rotate(90.9)" font-size="14" font-weight="700" textLength="22" lengthAdjust="spacingAndGlyphs">(((</text>
<text transform="translate(1145.4,665.5) rotate(90.9)" font-size="13" font-weight="700" fill="#33305a" textLength="17" lengthAdjust="spacingAndGlyphs">10</text>
<text transform="translate(1072,529.6) rotate(90.9)" font-size="8.5" font-weight="700" fill="#3a3660">VI</text>
<text transform="translate(1182.4,731.8) rotate(90.9)" font-size="7" font-weight="700" fill="#3a3660">VI</text>
<text transform="translate(1210,596) rotate(90.9)" font-size="30" font-weight="700" fill="#dadfb8">S</text>
<text transform="translate(1009,683) rotate(90.9)" font-size="22" font-weight="700">8</text>
<text transform="translate(966.5,759) rotate(90.9)" font-size="11" font-weight="700">UL</text>
</g>
<path d="M770 640L850 610L930 660L990 720L1000 790L770 792Z" fill="#4d5047" opacity="0.62" filter="url(#b10)"/>
<path d="M770 700L900 690L960 760L960 792L770 792Z" fill="#50534a" opacity="0.5" filter="url(#b5)"/>
<path d="M1252 745L1366 722L1362.5 804L1215 801Z" fill="#54574e" opacity="0.75" filter="url(#b5)"/>
<path d="M1256 770L1362 748L1362 760L1256 781Z" fill="#2a2c28" opacity="0.55" filter="url(#b2)"/>
<filter id="b12" x="-10%" y="-10%" width="120%" height="120%"><feGaussianBlur stdDeviation="1.3"/></filter>
<g filter="url(#b12)">
<path d="M1603 969L1631 944L1701 984V1023H1622L1608 990Z" fill="#2a2c2b"/>
<path d="M1606 985L1640 1000L1701 1012V1023H1620Z" fill="#15161a"/>
<path d="M1604 970L1631 945" stroke="#24252a" stroke-width="4"/>
<path d="M1510 936L1528 942L1550 950L1603 969L1610 990L1621 1023H1612L1528 944Z" fill="#4c5049"/>
<path d="M1550 950L1603 969L1609 992L1560 958Z" fill="#3b5a78" opacity="0.7"/>
<path d="M1577 900L1631 941.5L1620 951L1566 912Z" fill="#6c7162"/>
<path d="M1518 924L1568 911L1621 950L1603 969.5L1550 950L1526 943Z" fill="#1a4f8c"/>
<path d="M1562 928L1606 955L1600 962L1556 938Z" fill="#113670" opacity="0.85"/>
<path d="M1508 935L1515 912L1540 889.5L1562 888.5L1577 900L1568 912L1550 921L1546 938L1528 943Z" fill="#142f78"/>
<path d="M1512 930L1519 914L1538 900L1552 905L1534 918L1528 938Z" fill="#0f2462"/>
<ellipse cx="1572" cy="913" rx="7" ry="4.5" fill="#4f8fc0" opacity="0.8" transform="rotate(35 1572 913)"/>
<path d="M1540 930L1556 948" stroke="#3f7fbf" stroke-width="4" opacity="0.6"/>
</g>
<g filter="url(#b06)">
<path d="M1528 942.5L1620.5 1022" stroke="#c9c994" stroke-width="2.8"/>
<path d="M1577.5 900.5L1631 941.5" stroke="#a89c70" stroke-width="1.4" opacity="0.9"/>
</g>
<rect x="500" y="348" width="1201" height="674.9" filter="url(#pnoise)" opacity="0.5" style="mix-blend-mode:soft-light"/>
<g filter="url(#b06)"><path d="M1102 460.2L1146.6 460.8L1145 556.6L1100.4 556Z" fill="#dfe3cf"/>
<text transform="translate(1121.5,469) rotate(90.96)" font-size="24.5" fill="#3b3f63" textLength="77" lengthAdjust="spacingAndGlyphs">SAFETY</text>
<text transform="translate(1108.5,484) rotate(90.96)" font-size="12" fill="#4a4e70" textLength="50" lengthAdjust="spacing">MARK</text></g>
<g><path d="M1098.4 455.4L1150.2 455.4L1148 559.4L1096.7 558.9Z" fill="none" stroke="#a6f000" stroke-width="2.2"/>
<rect x="1094.8" y="451.8" width="7.2" height="7.2" fill="#a6f000"/>
<rect x="1120.7" y="451.8" width="7.2" height="7.2" fill="#a6f000"/>
<rect x="1146.6" y="451.8" width="7.2" height="7.2" fill="#a6f000"/>
<rect x="1093.9" y="503.6" width="7.2" height="7.2" fill="#a6f000"/>
<rect x="1145.5" y="503.8" width="7.2" height="7.2" fill="#a6f000"/>
<rect x="1093.1" y="555.3" width="7.2" height="7.2" fill="#a6f000"/>
<rect x="1118.8" y="555.6" width="7.2" height="7.2" fill="#a6f000"/>
<rect x="1144.4" y="555.8" width="7.2" height="7.2" fill="#a6f000"/>
<path d="M1150.4 456L1164.8 456.4L1164.4 487.2L1150 486.8Z" fill="#a6f000"/>
<text transform="translate(1152.6,460.2) rotate(90.96)" font-size="13.5" fill="#000" textLength="23" lengthAdjust="spacingAndGlyphs">ROI</text>
<circle cx="1161.2" cy="508.4" r="7.6" fill="#fff" stroke="#ddd" stroke-width="0.6"/>
<path d="M1157.6 507A3.8 3.8 0 0 1 1164.6 506.4M1164.8 509.8A3.8 3.8 0 0 1 1157.8 510.4" fill="none" stroke="#222" stroke-width="1.1"/><path d="M1165.6 504.2V507.2H1162.6ZM1156.8 512.6V509.6H1159.8Z" fill="#222"/>
</g>
</svg>
</figure>
<div id="roi-geometry">
<div class="a" style="left:498.5px;top:1032px;width:1204px;height:165px;border:2px solid #e6e6e6;border-radius:17px;background:#fff"></div>
<div class="a inp" style="left:544.4px"></div>
<div class="a inp" style="left:726px"></div>
<div class="a inp" style="left:904.2px"></div>
<div class="a inp" style="left:1080.3px"></div>
<div class="a inp" style="left:1261.4px"></div>
<div class="a abtn" style="left:578.8px"></div>
<div class="a abtn" style="left:658.5px"></div>
<div class="a abtn" style="left:811.7px"></div>
<div class="a abtn" style="left:891.6px"></div>
<div class="a abtn" style="left:995.2px;border-color:#8c8c8c"></div>
<div class="a" style="left:739.5px;top:1114.6px;width:1.5px;height:63px;background:#e4e4e4"></div>
<div class="a" style="left:974.5px;top:1122.4px;width:1.5px;height:47.5px;background:#e4e4e4"></div>
<svg class="a" style="left:0;top:0;overflow:visible;pointer-events:none" width="2412" height="1690" viewBox="0 0 2412 1690" fill="none" stroke-linejoin="round">
<path d="M597.8 1150.8H621.6" stroke="#8c8c8c" stroke-width="1.8"/><rect x="603.4" y="1140.1" width="4" height="21" fill="#8c8c8c"/><rect x="612.4" y="1144" width="4" height="13.6" fill="#8c8c8c"/>
<path d="M689.8 1135.4V1161" stroke="#8c8c8c" stroke-width="1.8"/><rect x="678.2" y="1142" width="23.8" height="4" fill="#8c8c8c"/><rect x="682.3" y="1150.6" width="15.2" height="4" fill="#8c8c8c"/>
<path d="M831.8 1136.7V1161M854 1136.7V1161" stroke="#8c8c8c" stroke-width="2"/><rect x="840.8" y="1142.8" width="4" height="11.8" fill="#8c8c8c"/>
<path d="M911 1138.3H934.9M911 1159.8H934.9" stroke="#8c8c8c" stroke-width="2"/><rect x="917.2" y="1147" width="12" height="4" fill="#8c8c8c"/>
<path d="M1015 1147.4L1026.2 1137.4V1143.6C1033 1144 1037.6 1148.6 1037.2 1158C1035 1153.4 1031.6 1151.4 1026.2 1151.3V1157.4Z" fill="#8c8c8c"/>
</svg>
<span class="t" style="left:514.30px;top:1064.60px;font-size:19.66px;font-weight:700;color:#262626;letter-spacing:1.505px;">H:</span>
<span class="t" style="left:559.00px;top:1058.71px;font-size:28.98px;color:#1f1f1f;letter-spacing:-0.199px;">156.76</span>
<span class="t" style="left:695.00px;top:1064.60px;font-size:19.66px;font-weight:700;color:#262626;letter-spacing:-0.897px;">W:</span>
<span class="t" style="left:743.00px;top:1058.71px;font-size:28.98px;color:#1f1f1f;letter-spacing:0.501px;">325.59</span>
<span class="t" style="left:876.70px;top:1064.60px;font-size:19.66px;font-weight:700;color:#262626;letter-spacing:0.189px;">X:</span>
<span class="t" style="left:920.20px;top:1058.71px;font-size:28.98px;color:#1f1f1f;letter-spacing:-0.467px;">2079.01</span>
<span class="t" style="left:1054.40px;top:1064.60px;font-size:19.66px;font-weight:700;color:#262626;letter-spacing:0.249px;">Y:</span>
<span class="t" style="left:1097.00px;top:1058.71px;font-size:28.98px;color:#1f1f1f;letter-spacing:0.130px;">345.7</span>
<span class="t" style="left:1277.30px;top:1058.71px;font-size:28.98px;color:#1f1f1f;letter-spacing:0.830px;">90.96</span>
<span class="t" style="left:515.30px;top:1138.40px;font-size:20.7px;color:#595959;letter-spacing:0.620px;-webkit-text-stroke:0.4px #595959;">Align:</span>
<span class="t" style="left:758.10px;top:1138.40px;font-size:20.7px;color:#595959;letter-spacing:0.993px;-webkit-text-stroke:0.4px #595959;">Dist:</span>
<span class="t" style="left:1246.80px;top:1064.60px;font-size:19.66px;font-weight:700;color:#262626;letter-spacing:0.000px;">:</span>
<span class="t" style="left:1231.00px;top:1071.00px;font-size:15.52px;color:#262626;letter-spacing:0.000px;font-family:'DejaVu Sans',sans-serif;">∠</span>
</div>
<div id="hints">
<svg class="a" style="left:0;top:0;overflow:visible;pointer-events:none" width="2412" height="1690" viewBox="0 0 2412 1690" fill="none" stroke-linejoin="round">
<rect x="505.0" y="1209.5" width="17.8" height="25.0" rx="8" stroke="#8c8c8c" stroke-width="2.4"/><path d="M504.8 1221.3H523.0M513.9 1209.3V1221.3" stroke="#8c8c8c" stroke-width="2"/><path d="M513.9 1209.5H512.8A7.8 7.8 0 0 0 505.0 1217.3V1221.3H513.9Z" fill="#8c8c8c"/>
<rect x="505.0" y="1253.5" width="17.8" height="25.0" rx="8" stroke="#8c8c8c" stroke-width="2.4"/><path d="M504.8 1265.3H523.0M513.9 1253.3V1265.3" stroke="#8c8c8c" stroke-width="2"/><path d="M513.9 1253.5H515.0A7.8 7.8 0 0 1 522.8 1261.3V1265.3H513.9Z" fill="#8c8c8c"/>
<path d="M500.5 1302.317H523.4" stroke="#8c8c8c" stroke-width="2.3"/><path d="M506.683 1302.317V1298.8500000000001H517.217V1302.317" stroke="#8c8c8c" stroke-width="2.3"/><path d="M503.477 1302.317L504.851 1320.85H519.049L520.423 1302.317" stroke="#8c8c8c" stroke-width="2.3"/>
</svg>
<span class="t" style="left:539.40px;top:1210.00px;font-size:24.84px;color:#8c8c8c;letter-spacing:0.360px;">Hold Shift + drag to select multiple ROIs, or Shift + click to select them one by one</span>
<span class="t" style="left:539.40px;top:1254.00px;font-size:24.84px;color:#8c8c8c;letter-spacing:0.364px;">Right-click inside the ROI to open the context menu for more options</span>
<span class="t" style="left:535.40px;top:1298.00px;font-size:24.84px;color:#8c8c8c;letter-spacing:0.072px;">Press Del or Backspace to remove selected ROIs</span>
</div>
</section>
<aside id="inspection-setup">
<div class="a" style="left:1712.8px;top:252px;width:4px;height:1417px;background:#ececec"></div>
<div class="a" style="left:1712.8px;top:941px;width:4px;height:40px;background:#c9c9c9"></div>
<div class="a" style="left:1727px;top:296px;width:194px;height:1226.5px;background:#fff;border-bottom:1.5px solid #dedede"></div>
<div class="a" style="left:1727px;top:296px;width:194px;height:96px;background:linear-gradient(#f3f3f3,#efefef);border-bottom:1.5px solid #dcdcdc"></div>
<div class="a" style="left:1727px;top:392px;width:194px;height:128px;background:#f4f0fb;border-bottom:1.5px solid #d9d9d9;border-right:8px solid #722ed1"></div>
<div class="a" style="left:1855px;top:414px;width:42px;height:39px;border-radius:9px;background:#722ed1"></div>
<div class="a" style="left:1921.2px;top:296px;width:1.6px;height:1298px;background:#e0e0e0"></div>
<div class="a" style="left:1922.5px;top:296px;width:451.5px;height:160px;background:linear-gradient(#f4f4f4,#efefef);border-bottom:1.5px solid #dcdcdc"></div>
<div class="a" style="left:1953px;top:383.6px;width:126.5px;height:42.5px;border:2px solid #d9d9d9;border-radius:9px;background:#fafafa"></div>
<div class="a" style="left:1943px;top:481px;width:404.5px;height:47px;border:2px dashed #d4d4d4;border-radius:13px;background:#fff;box-shadow:0 3px 0 rgba(0,0,0,.02)"></div>
<div class="a" style="left:1943px;top:615px;width:404.5px;height:46px;border:2px solid #d9d9d9;border-radius:9px;background:#fff"></div>
<div class="a" style="left:1943px;top:691.5px;width:404.5px;height:74px;border:4px solid #d9d9d9;border-radius:11px;background:#fff"></div>
<div class="a" style="left:1728px;top:1533px;width:149.5px;height:62px;border:2px solid #d9d9d9;border-radius:13px;background:#fff"></div>
<div class="a" style="left:1886.7px;top:1533px;width:30.5px;height:62px;border:2px solid #d9d9d9;border-radius:13px;background:#fff"></div>
<div class="a" style="left:1728px;top:1607px;width:645px;height:62px;border:2px solid #d9d9d9;border-radius:13px;background:#fff"></div>
<div class="a" style="left:1897.5px;top:1622.3px;width:31px;height:31px;border:2px solid #d9d9d9;border-radius:7px;background:#fff"></div>
<svg class="a" style="left:0;top:0;overflow:visible;pointer-events:none" width="2412" height="1690" viewBox="0 0 2412 1690" fill="none" stroke-linejoin="round">
<circle cx="1979.2" cy="274" r="12.8" stroke="#1f1f1f" stroke-width="2.4"/><path d="M1979.2 272V281" stroke="#1f1f1f" stroke-width="2.6"/><circle cx="1979.2" cy="267.4" r="1.7" fill="#1f1f1f"/>
<rect x="1747.10" y="342.49" width="19.80" height="11.41" rx="1.4" stroke="#595959" stroke-width="2.2"/><path d="M1750.18 342.49V335.42Q1750.18 331.90 1753.70 331.90H1760.08Q1763.60 331.90 1763.60 335.42V337.33" stroke="#595959" stroke-width="2.2" stroke-linecap="round"/><circle cx="1757.00" cy="347.54" r="1.36" fill="#595959"/><path d="M1757.00 347.74V351.34" stroke="#595959" stroke-width="1.21"/>
<rect x="1746.30" y="434.92" width="15.70" height="9.08" rx="1.4" stroke="#595959" stroke-width="2"/><path d="M1748.66 434.92V429.33Q1748.66 426.50 1751.50 426.50H1756.63Q1759.46 426.50 1759.46 429.33V430.76" stroke="#595959" stroke-width="2" stroke-linecap="round"/><circle cx="1754.15" cy="438.76" r="1.24" fill="#595959"/><path d="M1754.15 438.96V442.56" stroke="#595959" stroke-width="1.10"/>
<rect x="1946.90" y="577.19" width="23.60" height="14.21" rx="1.4" stroke="#1f1f1f" stroke-width="2.8"/><path d="M1950.52 577.19V568.22Q1950.52 564.00 1954.74 564.00H1962.40Q1966.62 564.00 1966.62 568.22V570.75" stroke="#1f1f1f" stroke-width="2.8" stroke-linecap="round"/><circle cx="1958.70" cy="583.79" r="1.74" fill="#1f1f1f"/><path d="M1958.70 583.99V587.59" stroke="#1f1f1f" stroke-width="1.54"/>
<rect x="2024.15" y="728.53" width="17.50" height="10.12" rx="1.4" stroke="#1f1f1f" stroke-width="2.3"/><path d="M2026.76 728.53V722.32Q2026.76 719.15 2029.93 719.15H2035.67Q2038.84 719.15 2038.84 722.32V723.89" stroke="#1f1f1f" stroke-width="2.3" stroke-linecap="round"/><circle cx="2032.90" cy="732.96" r="1.43" fill="#1f1f1f"/><path d="M2032.90 733.16V736.76" stroke="#1f1f1f" stroke-width="1.26"/>
<path d="M1878 342.7L1890 333V352.5Z" fill="#555"/>
<path d="M2317.7 337.8H2343.8M2317.7 347.2H2343.8M2317.7 356.6H2343.8" stroke="#1f1f1f" stroke-width="2.3"/>
<path d="M1987.5 493.5L1998.3 504L1991.4 510.8L1980.6 500.5Z" stroke="#1f1f1f" stroke-width="2.2"/><path d="M1982 502L1978.4 505.7L1986 513.1L1989.4 508.8" stroke="#1f1f1f" stroke-width="2.2"/><path d="M1979.8 507.4L1972.4 513.9M1971.4 514H1982L1984.2 511.3" stroke="#1f1f1f" stroke-width="2.3" stroke-linecap="round"/>
<circle cx="1968.9" cy="635" r="8.2" stroke="#1f1f1f" stroke-width="2.6"/><path d="M1975 641.4L1983.6 649.4" stroke="#1f1f1f" stroke-width="2.8"/>
<circle cx="1967.3" cy="719" r="1.8" fill="#8c8c8c"/>
<circle cx="1967.3" cy="728.3" r="1.8" fill="#8c8c8c"/>
<circle cx="1967.3" cy="737.6" r="1.8" fill="#8c8c8c"/>
<circle cx="1979.2" cy="719" r="1.8" fill="#8c8c8c"/>
<circle cx="1979.2" cy="728.3" r="1.8" fill="#8c8c8c"/>
<circle cx="1979.2" cy="737.6" r="1.8" fill="#8c8c8c"/>
<path d="M2258.6 733.6L2259.8 728.8L2272.6 717.4L2277 721.8L2264.4 733Z" stroke="#1f1f1f" stroke-width="2.2"/><path d="M2254.8 739.2H2279.6" stroke="#1f1f1f" stroke-width="2.2"/>
<path d="M2309.4 721.236H2332.7000000000003" stroke="#1f1f1f" stroke-width="2.3"/><path d="M2315.6910000000003 721.236V717.75H2326.409V721.236" stroke="#1f1f1f" stroke-width="2.3"/><path d="M2312.429 721.236L2313.827 739.85H2328.273L2329.6710000000003 721.236" stroke="#1f1f1f" stroke-width="2.3"/>
<path d="M1821.8 1556.6L1832.4 1570.4L1843 1556.6" stroke="#1f1f1f" stroke-width="2.4" stroke-linejoin="miter"/>
</svg><svg style="position:absolute;left:1888.3px;top:1550.4px;overflow:visible" width="27.2" height="27.2" viewBox="0 0 28 28"><path d="M9.20 5.69L10.11 2.02L17.89 2.02L18.80 5.69L18.80 5.69L22.43 4.64L26.32 11.38L23.60 14.00L23.60 14.00L26.32 16.62L22.43 23.36L18.80 22.31L18.80 22.31L17.89 25.98L10.11 25.98L9.20 22.31L9.20 22.31L5.57 23.36L1.68 16.62L4.40 14.00L4.40 14.00L1.68 11.38L5.57 4.64L9.20 5.69Z" fill="none" stroke="#1f1f1f" stroke-width="2.2" stroke-linejoin="round"/><circle cx="14" cy="14" r="4.6" fill="none" stroke="#1f1f1f" stroke-width="2.2"/></svg>
<h3 class="t" style="left:1726.60px;top:260.41px;font-size:28.98px;font-weight:700;color:#1f1f1f;letter-spacing:-0.319px;">Inspection Setup</h3>
<span class="t" style="left:1786.60px;top:307.70px;font-size:28.57px;font-weight:700;color:#1f1f1f;letter-spacing:0.338px;">Mode</span>
<span class="t" style="left:1785.60px;top:351.20px;font-size:28.57px;font-weight:700;color:#1f1f1f;letter-spacing:-0.336px;">ls</span>
<span class="t" style="left:1781.00px;top:419.81px;font-size:28.57px;font-weight:700;color:#1f1f1f;letter-spacing:0.797px;">Mo...</span>
<span class="t" style="left:1868.20px;top:424.51px;font-size:20.7px;font-weight:700;color:#ffffff;letter-spacing:0.000px;">O</span>
<span class="t" style="left:1742.80px;top:466.00px;font-size:26.91px;color:#8c8c8c;letter-spacing:-0.730px;">OCR</span>
<h3 class="t" style="left:1951.70px;top:333.91px;font-size:28.98px;font-weight:700;color:#1f1f1f;letter-spacing:0.592px;">Model</h3>
<span class="t" style="left:1989.90px;top:393.81px;font-size:23.8px;color:#1f1f1f;letter-spacing:-1.298px;">OCR</span>
<span class="t" style="left:2014.00px;top:489.91px;font-size:28.98px;color:#1f1f1f;letter-spacing:-0.051px;">Ignore Template Region</span>
<span class="t" style="left:1982.00px;top:566.31px;font-size:24.84px;font-weight:700;color:#1f1f1f;letter-spacing:-0.081px;">Region of Interest</span>
<span class="t" style="left:2241.00px;top:566.31px;font-size:24.84px;color:#722ed1;letter-spacing:-0.453px;">Add ROI</span>
<span class="t" style="left:1994.00px;top:624.20px;font-size:27.94px;color:#bfbfbf;letter-spacing:-0.155px;">Search ROIs</span>
<span class="t" style="left:2052.30px;top:717.00px;font-size:24.84px;color:#1f1f1f;letter-spacing:-0.671px;">ROI</span>
<span class="t" style="left:1759.90px;top:1549.71px;font-size:28.98px;color:#1f1f1f;letter-spacing:-0.566px;">Add</span>
<span class="t" style="left:1944.50px;top:1624.11px;font-size:28.98px;color:#1f1f1f;letter-spacing:-0.114px;">Live Preview Mode</span>
</aside>
</main>
<aside id="sidebar">
<nav aria-label="Main menu">
<div class="a" style="left:24px;top:92px;width:402px;height:80px;border-radius:16px;background:#722ed1"></div>
<div class="a" style="left:428px;top:120px;width:48px;height:48px;border-radius:24px;background:#fff;box-shadow:0 3px 10px rgba(0,0,0,.12)"></div>
<svg style="position:absolute;left:440px;top:132px;overflow:visible" width="24" height="24" viewBox="0 0 24 24" ><path d="M16.2 4.2L8.6 12L16.2 19.8" fill="none" stroke="#b5b5b5" stroke-width="3.2"/></svg>
<svg style="position:absolute;left:56px;top:118px;overflow:visible" width="28" height="28" viewBox="0 0 28 28" ><rect x="4" y="1.2" width="20" height="25.8" rx="1.5" fill="none" stroke="#fff" stroke-width="2.2" stroke-linecap="butt" stroke-linejoin="round"/><path d="M4 10H24M4 18H24" fill="none" stroke="#fff" stroke-width="2.2" stroke-linecap="butt" stroke-linejoin="round"/><circle cx="8.9" cy="5.6" r="1.3" fill="#fff"/><circle cx="8.9" cy="14" r="1.3" fill="#fff"/><circle cx="8.9" cy="22.5" r="1.3" fill="#fff"/></svg>
<svg style="position:absolute;left:56px;top:206px;overflow:visible" width="28" height="28" viewBox="0 0 28 28" ><path d="M5.8 20.4L7 15.4L19.6 2.8L24 7.2L11.4 19.6Z" fill="none" stroke="#a6adb4" stroke-width="2.1" stroke-linecap="butt" stroke-linejoin="round"/><path d="M1.6 25.4H26.4" fill="none" stroke="#a6adb4" stroke-width="2.1" stroke-linecap="butt" stroke-linejoin="round"/></svg>
<svg style="position:absolute;left:56px;top:294px;overflow:visible" width="28" height="28" viewBox="0 0 28 28" ><path d="M6 2.2H22" fill="none" stroke="#a6adb4" stroke-width="2.1" stroke-linecap="butt" stroke-linejoin="round"/><path d="M9.6 2.2V9.5L3.2 23.2Q2.6 25.3 4.8 25.3H23.2Q25.4 25.3 24.8 23.2L18.4 9.5V2.2" fill="none" stroke="#a6adb4" stroke-width="2.1" stroke-linecap="butt" stroke-linejoin="round"/><path d="M5.2 19Q9 16.5 13 18.5T22 17.5" fill="none" stroke="#a6adb4" stroke-width="1.8" stroke-linecap="butt" stroke-linejoin="round"/><circle cx="15" cy="12.8" r="1.2" fill="#a6adb4"/></svg>
<svg style="position:absolute;left:56px;top:382px;overflow:visible" width="28" height="28" viewBox="0 0 28 28" ><rect x="1.7" y="4.4" width="19.6" height="18.4" rx="1.5" fill="none" stroke="#a6adb4" stroke-width="2.1" stroke-linecap="butt" stroke-linejoin="round"/><path d="M21.8 12L27 8.6V19.4L21.8 16" fill="none" stroke="#a6adb4" stroke-width="2.1" stroke-linecap="butt" stroke-linejoin="round"/><path d="M5.2 8.6H9" fill="none" stroke="#a6adb4" stroke-width="1.6" stroke-linecap="butt" stroke-linejoin="round"/></svg>
<svg style="position:absolute;left:56px;top:470px;overflow:visible" width="28" height="28" viewBox="0 0 28 28" ><rect x="1.1" y="4.3" width="25.8" height="19.4" rx="1" fill="none" stroke="#a6adb4" stroke-width="2.1" stroke-linecap="butt" stroke-linejoin="round"/><path d="M1 10.4H27M1 17.6H27M9.7 4.3V23.7M18.5 4.3V23.7" fill="none" stroke="#a6adb4" stroke-width="2.1" stroke-linecap="butt" stroke-linejoin="round"/></svg>
<svg style="position:absolute;left:56px;top:558px;overflow:visible" width="28" height="28" viewBox="0 0 28 28" ><path d="M2.8 3V23.8H26" fill="none" stroke="#a6adb4" stroke-width="2.1" stroke-linecap="butt" stroke-linejoin="round"/><circle cx="12.6" cy="9.9" r="1.4" fill="#a6adb4"/><circle cx="22.1" cy="7" r="1.6" fill="#a6adb4"/><circle cx="8.7" cy="16.8" r="1.9" fill="#a6adb4"/><circle cx="18.6" cy="17" r="3" fill="#a6adb4"/></svg>
<svg style="position:absolute;left:56px;top:646px;overflow:visible" width="28" height="28" viewBox="0 0 28 28" ><circle cx="4.6" cy="15.9" r="2.7" fill="#a6adb4"/><path d="M4.6 15.9H27.8" fill="none" stroke="#a6adb4" stroke-width="2.1" stroke-linecap="butt" stroke-linejoin="round"/><path d="M11.8 7.3H22" fill="none" stroke="#a6adb4" stroke-width="2.1" stroke-linecap="butt" stroke-linejoin="round"/><path d="M19.6 3L26.4 7.3L19.6 11.6Z" fill="#a6adb4"/><path d="M12.6 15.9V21.8Q12.6 23.4 14.2 23.4H27.8" fill="none" stroke="#a6adb4" stroke-width="2.1" stroke-linecap="butt" stroke-linejoin="round"/></svg>
<svg style="position:absolute;left:56px;top:734px;overflow:visible" width="28" height="28" viewBox="0 0 28 28" ><path d="M22.9 6.2A11.6 11.6 0 1 0 22.9 21.6" fill="none" stroke="#a6adb4" stroke-width="2.1" stroke-linecap="butt" stroke-linejoin="round"/><path d="M13 13.9H24" fill="none" stroke="#a6adb4" stroke-width="2.1" stroke-linecap="butt" stroke-linejoin="round"/><path d="M21.6 9.4L27.8 13.9L21.6 18.4Z" fill="#a6adb4"/></svg>
<svg style="position:absolute;left:56px;top:822px;overflow:visible" width="28" height="28" viewBox="0 0 28 28" ><circle cx="14" cy="8.8" r="6.5" fill="none" stroke="#a6adb4" stroke-width="2.1" stroke-linecap="butt" stroke-linejoin="round"/><path d="M2.8 26.6A11.3 10.8 0 0 1 25.2 26.6" fill="none" stroke="#a6adb4" stroke-width="2.1" stroke-linecap="butt" stroke-linejoin="round"/></svg>
<svg style="position:absolute;left:56px;top:910px;overflow:visible" width="28" height="28" viewBox="0 0 28 28" ><path d="M2.4 20.9L11.4 11.9A7.4 7.4 0 0 1 22.1 3.2L15.6 8.7L18.9 12.2L25 6.9A7.2 7.2 0 0 1 15.9 16.4L7.2 25.4Z" fill="none" stroke="#a6adb4" stroke-width="2.1" stroke-linecap="butt" stroke-linejoin="round"/></svg>
<svg style="position:absolute;left:56px;top:998px;overflow:visible" width="28" height="28" viewBox="0 0 28 28" ><path d="M5.4 22V14.8A8.6 8.6 0 0 1 22.6 14.8V22Z" fill="none" stroke="#a6adb4" stroke-width="2.1" stroke-linecap="butt" stroke-linejoin="round"/><path d="M3 26.6H25" fill="none" stroke="#a6adb4" stroke-width="2.1" stroke-linecap="butt" stroke-linejoin="round"/><path d="M14 0.4V3.2M3.4 4.4L5.4 6.4M24.6 4.4L22.6 6.4" fill="none" stroke="#a6adb4" stroke-width="2.1" stroke-linecap="butt" stroke-linejoin="round"/><path d="M9.8 22V16.4H12" fill="none" stroke="#a6adb4" stroke-width="1.6" stroke-linecap="butt" stroke-linejoin="round"/></svg>
<svg style="position:absolute;left:56px;top:1086px;overflow:visible" width="28" height="28" viewBox="0 0 28 28"><path d="M9.20 5.69L10.11 2.02L17.89 2.02L18.80 5.69L18.80 5.69L22.43 4.64L26.32 11.38L23.60 14.00L23.60 14.00L26.32 16.62L22.43 23.36L18.80 22.31L18.80 22.31L17.89 25.98L10.11 25.98L9.20 22.31L9.20 22.31L5.57 23.36L1.68 16.62L4.40 14.00L4.40 14.00L1.68 11.38L5.57 4.64L9.20 5.69Z" fill="none" stroke="#a6adb4" stroke-width="2.1" stroke-linejoin="round"/><circle cx="14" cy="14" r="4.6" fill="none" stroke="#a6adb4" stroke-width="2.1"/></svg>
<svg style="position:absolute;left:56px;top:1627.5px;overflow:visible" width="28" height="28" viewBox="0 0 28 28" ><path d="M2.3 11.8A11.8 11.8 0 0 1 24.2 7.5" fill="none" stroke="#a6adb4" stroke-width="2.1" stroke-linecap="butt" stroke-linejoin="round"/><path d="M25.7 15A11.8 11.8 0 0 1 3.8 19.3" fill="none" stroke="#a6adb4" stroke-width="2.1" stroke-linecap="butt" stroke-linejoin="round"/><path d="M26.2 2.6V9.8H19Z" fill="#a6adb4"/><path d="M1.8 24.2V17H9Z" fill="#a6adb4"/></svg>
<svg style="position:absolute;left:370px;top:298px;overflow:visible" width="20" height="16" viewBox="0 0 20 16" ><path d="M2.5 4L10 11.5L17.5 4" fill="none" stroke="#a6adb4" stroke-width="2.6"/></svg>
<svg style="position:absolute;left:370px;top:914px;overflow:visible" width="20" height="16" viewBox="0 0 20 16" ><path d="M2.5 4L10 11.5L17.5 4" fill="none" stroke="#a6adb4" stroke-width="2.6"/></svg>
<span class="t" style="left:101.40px;top:118.00px;font-size:28.98px;color:#ffffff;letter-spacing:-0.482px;">All Recipes</span>
<span class="t" style="left:99.40px;top:206.00px;font-size:28.98px;color:#a6adb4;letter-spacing:-0.221px;">Recipe Editor</span>
<span class="t" style="left:99.40px;top:294.00px;font-size:28.98px;color:#a6adb4;letter-spacing:0.020px;">Recipe Backtesting</span>
<span class="t" style="left:99.00px;top:382.00px;font-size:28.98px;color:#a6adb4;letter-spacing:0.424px;">HMI</span>
<span class="t" style="left:98.70px;top:470.00px;font-size:28.98px;color:#a6adb4;letter-spacing:0.273px;">Library</span>
<span class="t" style="left:98.70px;top:558.00px;font-size:28.98px;color:#a6adb4;letter-spacing:-0.035px;">Haystack</span>
<span class="t" style="left:98.70px;top:646.00px;font-size:28.98px;color:#a6adb4;letter-spacing:0.141px;">Industrial Ethernet</span>
<span class="t" style="left:98.70px;top:734.00px;font-size:28.98px;color:#a6adb4;letter-spacing:-0.048px;">I/O Live Monitor</span>
<span class="t" style="left:98.70px;top:822.00px;font-size:28.98px;color:#a6adb4;letter-spacing:-0.133px;">Users and Permissions</span>
<span class="t" style="left:100.70px;top:910.00px;font-size:28.98px;color:#a6adb4;letter-spacing:-0.110px;">Tools</span>
<span class="t" style="left:98.70px;top:998.00px;font-size:28.98px;color:#a6adb4;letter-spacing:0.112px;">Diagnostic Logs</span>
<span class="t" style="left:99.70px;top:1086.00px;font-size:28.98px;color:#a6adb4;letter-spacing:0.042px;">System Settings</span>
<span class="t" style="left:103.90px;top:1628.41px;font-size:28.98px;color:#a6adb4;letter-spacing:0.145px;">Software Update</span>
</nav>
</aside>
<div id="help-fab">
<div class="a" style="left:2284px;top:1514px;width:80px;height:80px;border-radius:40px;background:#722ed1;box-shadow:0 8px 24px rgba(0,0,0,.14),0 2px 6px rgba(0,0,0,.08)"></div>
<svg class="a" style="left:0;top:0;overflow:visible;pointer-events:none" width="2412" height="1690" viewBox="0 0 2412 1690" fill="none" stroke-linejoin="round">
<circle cx="2324" cy="1554" r="16.6" stroke="#fff" stroke-width="2.6"/>
</svg>
<span class="t" style="left:2316.66px;top:1542.90px;font-size:25.87px;color:#ffffff;letter-spacing:0.000px;-webkit-text-stroke:0.52px #ffffff;">?</span>
</div>
</body></html>
